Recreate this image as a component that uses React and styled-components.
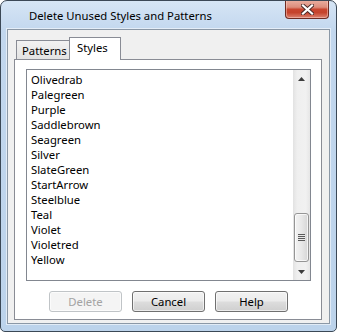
import React from "react";
import styled, { createGlobalStyle } from "styled-components";

const GlobalStyle = createGlobalStyle`
  html, body {
    margin: 0;
    padding: 0;
    background: #ffffff;
  }
  body {
    font-family: "Noto Sans", "Open Sans", sans-serif;
    font-size: 11.3px;
    color: #000;
  }
`;

const Window = styled.div`
  width: 337px;
  height: 332px;
  box-sizing: border-box;
  display: flex;
  flex-direction: column;
  border: 1px solid #3b4856;
  border-radius: 7px 7px 5px 5px;
  background: linear-gradient(#d6e5f5, #c2d7ee 30px, #bcd3eb);
  overflow: hidden;
`;

const TitleBar = styled.div`
  height: 28px;
  flex: none;
  display: flex;
  align-items: flex-start;
`;

const Title = styled.div`
  padding: 7px 0 0 28px;
  line-height: 16px;
  color: #000;
  white-space: nowrap;
`;

const CloseButton = styled.div`
  margin: -1px 7px 0 auto;
  width: 44px;
  height: 19px;
  box-sizing: border-box;
  display: flex;
  align-items: center;
  justify-content: center;
  border: 1px solid #6e2b22;
  border-top: none;
  border-radius: 0 0 4px 4px;
  background: linear-gradient(
    #eab0a2 0%,
    #dc8d7c 40%,
    #c8452f 52%,
    #c5432c 70%,
    #dc8270 100%
  );
  box-shadow: inset 0 0 0 1px rgba(255, 220, 210, 0.45);
`;

const Client = styled.div`
  flex: 1;
  margin: 0 6px 7px 6px;
  padding: 7px 7px 3px 6px;
  display: flex;
  flex-direction: column;
  border: 1px solid #8b98a6;
  background: #f0f0f0;
  box-shadow: 0 0 0 1px rgba(255, 255, 255, 0.55);
`;

const TabStrip = styled.div`
  height: 22px;
  flex: none;
  display: flex;
  align-items: flex-end;
  padding-left: 2px;
`;

const Tab = styled.div`
  position: relative;
  box-sizing: border-box;
  display: flex;
  align-items: center;
  border: 1px solid #898c95;
  border-bottom: none;
  white-space: nowrap;
  ${(p) =>
    p.$active
      ? `
    width: 52px;
    height: 23px;
    margin: 0 0 -1px -1px;
    padding: 0 0 3px 7px;
    background: #ffffff;
    z-index: 1;
  `
      : `
    width: 54px;
    height: 19px;
    padding: 1px 0 0 5px;
    background: linear-gradient(#f2f2f2, #e3e3e3);
  `}
`;

const Panel = styled.div`
  flex: 1;
  display: flex;
  flex-direction: column;
  padding: 9px 10px 7px 11px;
  border: 1px solid #898c95;
  background: #ffffff;
`;

const ListBox = styled.div`
  height: 212px;
  box-sizing: border-box;
  display: flex;
  border: 1px solid #828790;
  background: #ffffff;
`;

const Items = styled.ul`
  flex: 1;
  list-style: none;
  margin: 0;
  padding: 2px 0 0 4px;
  overflow: hidden;
`;

const Item = styled.li`
  height: 15px;
  line-height: 15px;
  white-space: nowrap;
`;

const ScrollBar = styled.div`
  width: 17px;
  flex: none;
  display: flex;
  flex-direction: column;
  background: linear-gradient(to right, #e2e2e2, #efefef 25%, #f1f1f1 75%, #e6e6e6);
`;

const ArrowButton = styled.div`
  height: 17px;
  flex: none;
  display: flex;
  align-items: center;
  justify-content: center;
`;

const Track = styled.div`
  flex: 1;
  display: flex;
  flex-direction: column;
  justify-content: flex-end;
  padding: 0 1px 1px 1px;
`;

const Thumb = styled.div`
  height: 49px;
  box-sizing: border-box;
  display: flex;
  align-items: center;
  justify-content: center;
  border: 1px solid #959595;
  border-radius: 3px;
  background: linear-gradient(to right, #f3f3f3, #e8e8e8 50%, #d6d6d6);
  box-shadow: inset 0 0 0 1px rgba(255, 255, 255, 0.7);
`;

const Grip = styled.div`
  width: 7px;
  height: 7px;
  background: repeating-linear-gradient(
    #5a5a5a 0px,
    #5a5a5a 1px,
    #e8e8e8 1px,
    #e8e8e8 2px
  );
`;

const ButtonRow = styled.div`
  margin-top: 10px;
  display: flex;
  justify-content: center;
  gap: 10px;
`;

const Button = styled.button`
  width: 73px;
  height: 21px;
  padding: 0;
  font-family: inherit;
  font-size: inherit;
  font-weight: 400;
  line-height: 17px;
  color: ${(p) => (p.disabled ? "#a3a3a3" : "#000")};
  border: 1px solid ${(p) => (p.disabled ? "#c0c4c7" : "#707070")};
  border-radius: 3px;
  background: ${(p) =>
    p.disabled
      ? "#f4f4f4"
      : "linear-gradient(#f2f2f2 0%, #ebebeb 48%, #dddddd 52%, #cfcfcf 100%)"};
  box-shadow: inset 0 0 0 1px rgba(255, 255, 255, 0.6);
`;

const items = [
  "Olivedrab",
  "Palegreen",
  "Purple",
  "Saddlebrown",
  "Seagreen",
  "Silver",
  "SlateGreen",
  "StartArrow",
  "Steelblue",
  "Teal",
  "Violet",
  "Violetred",
  "Yellow",
];

function Arrow({ up }) {
  return (
    <svg width="7" height="4" viewBox="0 0 7 4">
      <path d={up ? "M3.5 0 L7 4 L0 4 Z" : "M0 0 L7 0 L3.5 4 Z"} fill="#3c3c3c" />
    </svg>
  );
}

export default function App() {
  return (
    <>
      <GlobalStyle />
      <Window>
        <TitleBar>
          <Title>Delete Unused Styles and Patterns</Title>
          <CloseButton>
            <svg width="13" height="11" viewBox="0 0 13 11">
              <path
                d="M2 1.5 L11 9.5 M11 1.5 L2 9.5"
                stroke="#4a2a28"
                strokeWidth="4"
                strokeLinecap="square"
              />
              <path
                d="M2 1.5 L11 9.5 M11 1.5 L2 9.5"
                stroke="#ffffff"
                strokeWidth="2.2"
                strokeLinecap="square"
              />
            </svg>
          </CloseButton>
        </TitleBar>
        <Client>
          <TabStrip>
            <Tab>Patterns</Tab>
            <Tab $active>Styles</Tab>
          </TabStrip>
          <Panel>
            <ListBox>
              <Items>
                {items.map((name) => (
                  <Item key={name}>{name}</Item>
                ))}
              </Items>
              <ScrollBar>
                <ArrowButton>
                  <Arrow up />
                </ArrowButton>
                <Track>
                  <Thumb>
                    <Grip />
                  </Thumb>
                </Track>
                <ArrowButton>
                  <Arrow />
                </ArrowButton>
              </ScrollBar>
            </ListBox>
            <ButtonRow>
              <Button disabled>Delete</Button>
              <Button>Cancel</Button>
              <Button>Help</Button>
            </ButtonRow>
          </Panel>
        </Client>
      </Window>
    </>
  );
}
